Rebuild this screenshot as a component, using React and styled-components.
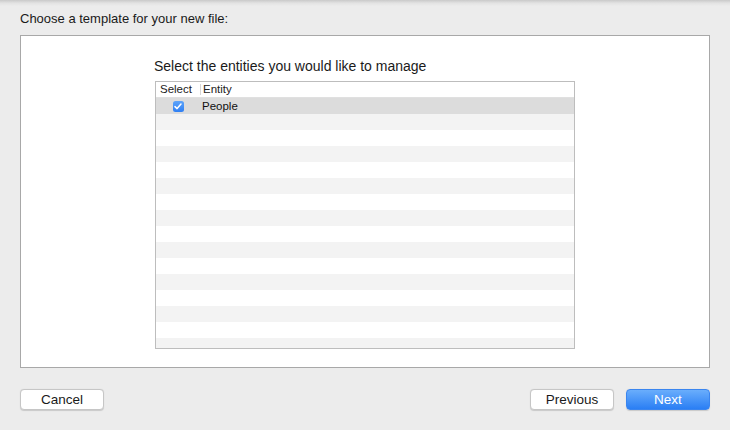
import React from "react";
import styled, { createGlobalStyle } from "styled-components";

const Global = createGlobalStyle`
  html, body { margin: 0; padding: 0; }
  body {
    width: 730px; height: 430px; overflow: hidden;
    background: #ececec;
    font-family: "Liberation Sans", Arial, sans-serif;
    color: #1a1a1a;
  }
`;

const Window = styled.div`
  width: 730px;
  height: 430px;
  display: flex;
  flex-direction: column;
  box-sizing: border-box;
  padding: 0 20px;
  background: linear-gradient(#c9c9c9 0px, #e2e2e2 3px, #ececec 6px);
`;

const Title = styled.div`
  font-size: 13px;
  height: 35px;
  line-height: 37px;
`;

const Panel = styled.div`
  height: 333px;
  box-sizing: border-box;
  background: #fff;
  border: 1px solid #a8a8a8;
  display: flex;
  flex-direction: column;
  align-items: flex-start;
  padding-left: 133px;
`;

const Heading = styled.div`
  font-size: 14px;
  margin-top: 22px;
  height: 23px;
  line-height: 16px;
`;

const Table = styled.div`
  width: 420px;
  height: 268px;
  box-sizing: border-box;
  margin-left: 1px;
  border: 1px solid #bdbdbd;
  overflow: hidden;
  display: flex;
  flex-direction: column;
  font-size: 11.5px;
`;

const HeaderRow = styled.div`
  height: 15px;
  flex: none;
  display: flex;
  align-items: center;
  background: #fff;
  border-bottom: 1px solid #e0e0e0;
  color: #222;
`;

const HeaderCell = styled.div`
  width: ${(p) => p.$w || "auto"};
  flex: ${(p) => (p.$w ? "none" : 1)};
  box-sizing: border-box;
  padding-left: ${(p) => p.$pl || "4px"};
  height: 11px;
  line-height: 11px;
  border-right: ${(p) => (p.$divider ? "1px solid #d6d6d6" : "none")};
`;

const Row = styled.div`
  height: 16px;
  flex: none;
  display: flex;
  align-items: center;
  background: ${(p) => (p.$selected ? "#dcdcdc" : p.$stripe ? "#f3f3f3" : "#fff")};
`;

const CheckCell = styled.div`
  width: 45px;
  flex: none;
  display: flex;
  justify-content: center;
  padding-right: 1px;
  box-sizing: border-box;
`;

const Check = styled.div`
  width: 11px;
  height: 11px;
  border-radius: 2.5px;
  background: linear-gradient(#5ea4fa, #2f7ff3);
  display: flex;
  align-items: center;
  justify-content: center;
`;

const Cell = styled.div`
  padding-left: 1px;
  color: #111;
`;

const Footer = styled.div`
  flex: 1;
  display: flex;
  align-items: flex-start;
  padding-top: 21px;
`;

const Spacer = styled.div`
  flex: 1;
`;

const Button = styled.button`
  width: 84px;
  height: 21px;
  box-sizing: border-box;
  margin-left: ${(p) => p.$ml || "0"};
  border-radius: 4px;
  font-family: "Liberation Sans", Arial, sans-serif;
  font-size: 13.5px;
  padding: 0;
  line-height: 19px;
  border: 1px solid ${(p) => (p.$primary ? "#3a85ef" : "#c6c6c6")};
  background: ${(p) => (p.$primary ? "linear-gradient(#6aaefc, #2a7ef4)" : "#fff")};
  color: ${(p) => (p.$primary ? "#fff" : "#1a1a1a")};
  box-shadow: 0 0.5px 1px rgba(0,0,0,0.15);
`;

export default function App() {
  const rows = Array.from({ length: 15 }, (_, i) => i);
  return (
    <>
      <Global />
      <Window>
        <Title>Choose a template for your new file:</Title>
        <Panel>
          <Heading>Select the entities you would like to manage</Heading>
          <Table>
            <HeaderRow>
              <HeaderCell $w="45px" $divider>Select</HeaderCell>
              <HeaderCell $pl="2px">Entity</HeaderCell>
            </HeaderRow>
            <Row $selected>
              <CheckCell>
                <Check>
                  <svg width="8" height="7" viewBox="0 0 8 7">
                    <path d="M1 3.6 L3.1 5.6 L7 1" fill="none" stroke="#fff" strokeWidth="1.5" strokeLinecap="round" strokeLinejoin="round" />
                  </svg>
                </Check>
              </CheckCell>
              <Cell>People</Cell>
            </Row>
            {rows.map((i) => (
              <Row key={i} $stripe={i % 2 === 0} />
            ))}
          </Table>
        </Panel>
        <Footer>
          <Button>Cancel</Button>
          <Spacer />
          <Button>Previous</Button>
          <Button $primary $ml="12px">Next</Button>
        </Footer>
      </Window>
    </>
  );
}
